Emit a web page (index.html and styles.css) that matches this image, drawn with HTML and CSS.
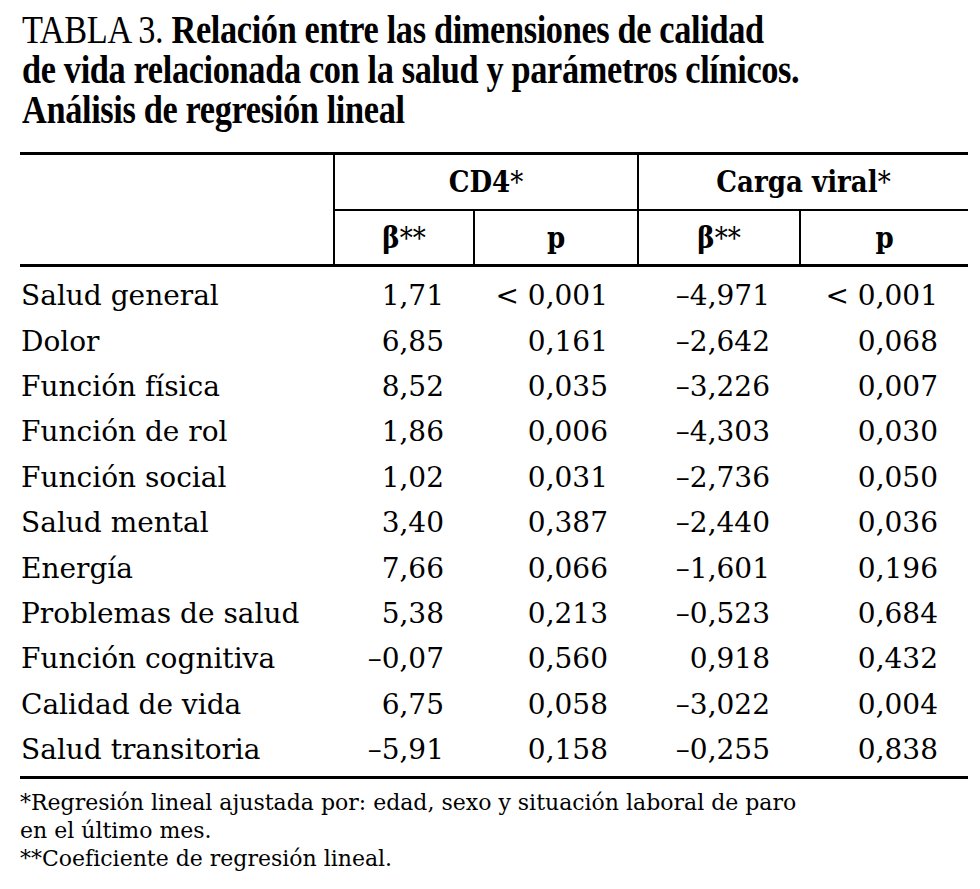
FILE: index.html
```html
<!DOCTYPE html>
<html lang="es">
<head>
<meta charset="utf-8">
<link rel="stylesheet" href="styles.css">
</head>
<body>
<div class="page">
  <h1 class="title"><span class="label">TABLA 3.</span> Relación entre las dimensiones de calidad<br>de vida relacionada con la salud y parámetros clínicos.<br>Análisis de regresión lineal</h1>
  <table class="data">
    <colgroup>
      <col class="c-name"><col class="c-num"><col class="c-num2"><col class="c-num3"><col class="c-num4">
    </colgroup>
    <thead>
      <tr class="h1">
        <th class="blank" rowspan="2"></th>
        <th colspan="2">CD4<span class="ast">*</span></th>
        <th colspan="2" class="last">Carga viral<span class="ast">*</span></th>
      </tr>
      <tr class="h2">
        <th>β<span class="ast">**</span></th>
        <th>p</th>
        <th>β<span class="ast">**</span></th>
        <th class="last">p</th>
      </tr>
    </thead>
    <tbody>
      <tr class="first"><td>Salud general</td><td>1,71</td><td>&lt; 0,001</td><td>–4,971</td><td>&lt; 0,001</td></tr>
      <tr><td>Dolor</td><td>6,85</td><td>0,161</td><td>–2,642</td><td>0,068</td></tr>
      <tr><td>Función física</td><td>8,52</td><td>0,035</td><td>–3,226</td><td>0,007</td></tr>
      <tr><td>Función de rol</td><td>1,86</td><td>0,006</td><td>–4,303</td><td>0,030</td></tr>
      <tr><td>Función social</td><td>1,02</td><td>0,031</td><td>–2,736</td><td>0,050</td></tr>
      <tr><td>Salud mental</td><td>3,40</td><td>0,387</td><td>–2,440</td><td>0,036</td></tr>
      <tr><td>Energía</td><td>7,66</td><td>0,066</td><td>–1,601</td><td>0,196</td></tr>
      <tr><td>Problemas de salud</td><td>5,38</td><td>0,213</td><td>–0,523</td><td>0,684</td></tr>
      <tr><td>Función cognitiva</td><td>–0,07</td><td>0,560</td><td>0,918</td><td>0,432</td></tr>
      <tr><td>Calidad de vida</td><td>6,75</td><td>0,058</td><td>–3,022</td><td>0,004</td></tr>
      <tr class="lastrow"><td>Salud transitoria</td><td>–5,91</td><td>0,158</td><td>–0,255</td><td>0,838</td></tr>
    </tbody>
  </table>
  <div class="notes">
    <p>*Regresión lineal ajustada por: edad, sexo y situación laboral de paro<br>en el último mes.</p>
    <p>**Coeficiente de regresión lineal.</p>
  </div>
</div>
</body>
</html>
```
FILE: styles.css
```css
html, body {
  margin: 0;
  padding: 0;
  background: #fff;
  color: #000;
}
.page {
  padding: 10px 12px 0 20px;
  font-family: "DejaVu Serif", "Liberation Serif", serif;
}
.title {
  margin: 0 0 22px 2px;
  font-family: "Liberation Serif", serif;
  font-weight: bold;
  font-size: 39px;
  line-height: 40px;
  letter-spacing: -0.4px;
  white-space: nowrap;
  transform: scaleX(0.88);
  transform-origin: left top;
}
.title .label {
  font-weight: normal;
}
.data {
  width: 948px;
  border-collapse: collapse;
  font-size: 28px;
}
.c-name { width: 314px; }
.c-num { width: 140px; }
.c-num2 { width: 164px; }
.c-num3 { width: 162px; }
.c-num4 { width: 168px; }
thead {
  border-top: 3px solid #000;
  border-bottom: 3px solid #000;
}
th {
  font-family: "DejaVu Serif Condensed", "Liberation Serif", serif;
  font-stretch: condensed;
  font-weight: bold;
  font-size: 29px;
  text-align: center;
  border-left: 2px solid #000;
  padding: 0;
}
th.blank { border-left: none; }
.h1 th { height: 54px; border-bottom: 2px solid #000; }
.h2 th { height: 53px; }
th .ast { font-weight: normal; }
td {
  padding: 0 30px 0 0;
  height: 45.4px;
  text-align: right;
  white-space: nowrap;
}
td:first-child {
  text-align: left;
  padding: 0 0 0 1px;
}
tr.first td { padding-top: 6px; }
tr.lastrow td { padding-bottom: 4px; }
tbody { border-bottom: 3px solid #000; }
.notes {
  margin-top: 10px;
  font-size: 22px;
  line-height: 28px;
}
.notes p { margin: 0; }
```
